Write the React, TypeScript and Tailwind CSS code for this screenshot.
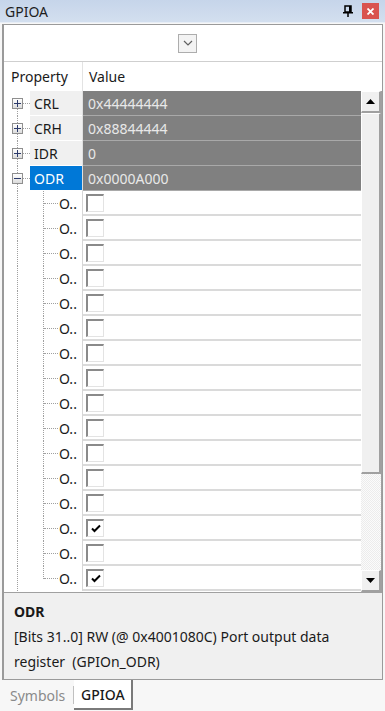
import React from "react";

const font = { fontFamily: '"Noto Sans", "Open Sans", sans-serif' };

function Expander({ open }: { open: boolean }) {
  return (
    <div className="absolute left-[8px] top-[7px] w-[11px] h-[11px] border border-[#8f8f8f] bg-gradient-to-b from-white to-[#dcdcdc] flex items-center justify-center">
      <svg width="7" height="7" viewBox="0 0 7 7">
        <rect x="0" y="3" width="7" height="1" fill="#2b3a6b" />
        {!open && <rect x="3" y="0" width="1" height="7" fill="#2b3a6b" />}
      </svg>
    </div>
  );
}

function RegRow({ name, value, open, selected, first }: { name: string; value: string; open?: boolean; selected?: boolean; first?: boolean }) {
  return (
    <div className="flex h-[25px]">
      <div className="relative w-[26px] shrink-0 bg-white">
        <div className={`absolute left-[13px] ${first ? "top-[12px]" : "top-0"} bottom-0 border-l border-dotted border-[#a0a0a0]`} />
        <div className="absolute left-[19px] top-[12px] w-[7px] border-t border-dotted border-[#a0a0a0]" />
        <Expander open={!!open} />
      </div>
      <div className={`w-[52px] shrink-0 border-b border-white flex items-center pl-[4px] text-[14px] ${selected ? "bg-[#0078d7] text-white" : "bg-[#f0f0f0] text-[#1a1a1a]"}`}>{name}</div>
      <div className="w-px shrink-0 bg-[#e0e0e0]" />
      <div className="flex-1 bg-[#808080] border-b border-[#a9a9a9] flex items-center pl-[5px] text-[14px] text-[#e8e8e8]">{value}</div>
    </div>
  );
}

function CheckBox({ checked }: { checked: boolean }) {
  return (
    <div className="w-[18px] h-[18px] border-t-2 border-l-2 border-[#8a8a8a] border-r border-b border-r-[#e3e3e3] border-b-[#e3e3e3] bg-white flex items-center justify-center">
      {checked && (
        <svg width="10" height="9" viewBox="0 0 10 9">
          <path d="M1 4.5 L3.5 7 L9 1.5" stroke="#000" strokeWidth="2" fill="none" />
        </svg>
      )}
    </div>
  );
}

function BitRow({ checked, last }: { checked: boolean; last?: boolean }) {
  return (
    <div className="flex h-[25px]">
      <div className="relative w-[78px] shrink-0 bg-white">
        <div className="absolute left-[13px] top-0 bottom-0 border-l border-dotted border-[#a0a0a0]" />
        <div className={`absolute left-[39px] top-0 ${last ? "h-[13px]" : "bottom-0"} border-l border-dotted border-[#a0a0a0]`} />
        <div className="absolute left-[40px] top-[12px] w-[14px] border-t border-dotted border-[#a0a0a0]" />
        <div className="absolute left-[55px] top-0 h-[25px] flex items-center text-[14px] text-[#1a1a1a]">O..</div>
      </div>
      <div className="w-px shrink-0 bg-[#d6d6d6]" />
      <div className="flex-1 bg-white border-b-2 border-[#dadada] flex items-center pl-[3px]">
        <CheckBox checked={checked} />
      </div>
    </div>
  );
}

function Scrollbar() {
  return (
    <div className="w-[20px] shrink-0 flex flex-col bg-[#f2f2f2]">
      <div className="h-[22px] shrink-0 bg-[#f0f0f0] border-r-2 border-b-2 border-[#a0a0a0] border-t border-l border-t-white border-l-white flex items-center justify-center">
        <svg width="9" height="5" viewBox="0 0 9 5"><path d="M0 5 L4.5 0 L9 5 Z" fill="#000" /></svg>
      </div>
      <div className="h-[361px] shrink-0 bg-[#f0f0f0] border-r-2 border-b-2 border-[#a0a0a0] border-t border-l border-t-white border-l-white" />
      <div className="flex-1 bg-[repeating-conic-gradient(#ececec_0%_25%,#fbfbfb_0%_50%)] bg-[length:2px_2px]" />
      <div className="h-[22px] shrink-0 bg-[#f0f0f0] border-r-2 border-b-2 border-[#a0a0a0] border-t border-l border-t-white border-l-white flex items-center justify-center">
        <svg width="9" height="5" viewBox="0 0 9 5"><path d="M0 0 L9 0 L4.5 5 Z" fill="#000" /></svg>
      </div>
    </div>
  );
}

export default function App() {
  const bits = Array.from({ length: 16 }, (_, i) => i === 13 || i === 15);
  return (
    <div className="w-[385px] h-[711px] bg-[#f7f7f7] flex flex-col overflow-hidden" style={font}>
      {/* title bar */}
      <div className="h-[23px] shrink-0 bg-gradient-to-b from-[#c6d5ea] to-[#d3dfef] flex items-center pl-[5px] pr-[6px] border-b border-[#e8eef6]">
        <span className="text-[14px] text-[#1e1e1e] flex-1">GPIOA</span>
        <svg width="10" height="12" viewBox="0 0 10 12" className="mr-[9px]">
          <rect x="2" y="1" width="6" height="6" fill="none" stroke="#000" strokeWidth="1.5" />
          <rect x="6" y="1" width="2" height="6" fill="#000" />
          <rect x="0" y="7" width="10" height="1.5" fill="#000" />
          <rect x="4.25" y="8" width="1.5" height="4" fill="#000" />
        </svg>
        <div className="w-[17px] h-[16px] bg-[#d9534f] flex items-center justify-center">
          <svg width="7" height="7" viewBox="0 0 7 7"><path d="M0.5 0.5 L6.5 6.5 M6.5 0.5 L0.5 6.5" stroke="#fff" strokeWidth="1.8" /></svg>
        </div>
      </div>
      {/* main panel */}
      <div className="mx-[2px] mt-[1px] h-[656px] shrink-0 border border-[#9a9a9a] border-l-2 bg-white flex flex-col">
        <div className="h-[36px] shrink-0 flex items-center justify-center">
          <div className="w-[19px] h-[19px] border border-[#adadad] bg-[#f3f3f3] flex items-center justify-center ml-[-11px]">
            <svg width="10" height="6" viewBox="0 0 10 6"><path d="M1 1 L5 5 L9 1" stroke="#606060" strokeWidth="1.2" fill="none" /></svg>
          </div>
        </div>
        <div className="h-[1px] bg-[#cfcfcf] shrink-0" />
        <div className="h-[29px] shrink-0 flex text-[14px] text-[#1a1a1a]">
          <div className="w-[78px] flex items-center pl-[7px]">Property</div>
          <div className="w-px bg-[#e3e3e3]" />
          <div className="flex items-center pl-[6px]">Value</div>
        </div>
        <div className="flex h-[501px] shrink-0 border-r border-[#a0a0a0]">
          <div className="flex-1 flex flex-col">
            <RegRow name="CRL" value="0x44444444" first />
            <RegRow name="CRH" value="0x88844444" />
            <RegRow name="IDR" value="0" />
            <RegRow name="ODR" value="0x0000A000" open selected />
            {bits.map((c, i) => (
              <BitRow key={i} checked={c} last={i === 15} />
            ))}
          </div>
          <Scrollbar />
        </div>
        <div className="flex-1 bg-[#f0f0f0] border-t border-[#a0a0a0] px-[10px] pt-[6px] text-[14px] text-[#1a1a1a] leading-[25px]">
          <div className="font-bold">ODR</div>
          <div>[Bits 31..0] RW (@ 0x4001080C) Port output data</div>
          <div>register&nbsp; (GPIOn_ODR)</div>
        </div>
      </div>
      {/* tabs */}
      <div className="flex h-[30px] items-stretch">
        <div className="pl-[10px] pr-[8px] flex items-center text-[14px] text-[#8a8a8a]">Symbols</div>
        <div className="w-px my-[6px] bg-[#c0c0c0]" />
        <div className="w-[59px] bg-white border-r-2 border-b-2 border-[#7a7a7a] flex items-center justify-center text-[14px] font-medium text-[#1a1a1a]">GPIOA</div>
      </div>
    </div>
  );
}
